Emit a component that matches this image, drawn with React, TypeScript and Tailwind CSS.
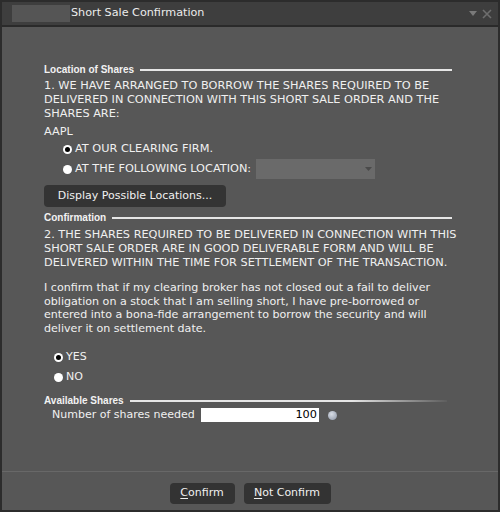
function SectionHeader({ title, fade }: { title: string; fade?: boolean }) {
  return (
    <div className="flex h-[12px] items-center gap-[6px]">
      <span className="font-['Liberation_Sans',Arial,sans-serif] text-[10px] font-bold leading-none text-[#f2f2f2]">
        {title}
      </span>
      {fade ? (
        <div className="mr-[5px] h-[2px] flex-1 bg-gradient-to-r from-[#e6e6e6] via-[#e6e6e6] via-70% to-[#5e5e5e]" />
      ) : (
        <div className="h-[2px] flex-1 bg-[#e6e6e6]" />
      )}
    </div>
  );
}

function Radio({ checked, label }: { checked?: boolean; label: string }) {
  return (
    <div className="flex h-[20px] items-center gap-[3px]">
      <span className="flex h-[9px] w-[9px] items-center justify-center rounded-full bg-white">
        {checked && <span className="h-[5px] w-[5px] rounded-full bg-black" />}
      </span>
      <span>{label}</span>
    </div>
  );
}

export default function App() {
  return (
    <div className="flex h-[512px] w-[500px] flex-col bg-[#2c2c2c] p-[2px] font-['DejaVu_Sans',Verdana,sans-serif] text-[11.3px] text-[#f0f0f0] whitespace-nowrap">
      {/* Title bar */}
      <div className="flex h-[23px] items-center bg-[#3e3e3e]">
        <div className="ml-[10px] h-[17px] w-[58px] bg-[#555555]" />
        <span className="ml-[1px] text-[11.2px] text-[#ececec]">Short Sale Confirmation</span>
        <div className="ml-auto mr-[6px] flex items-center gap-[5px]">
          <svg width="8" height="5" viewBox="0 0 8 5">
            <path d="M0 0h8L4 5z" fill="#7a7a7a" />
          </svg>
          <svg width="10" height="10" viewBox="0 0 10 10">
            <path d="M1 1l8 8M9 1l-8 8" stroke="#6e6e6e" strokeWidth="1.6" />
          </svg>
        </div>
      </div>
      <div className="h-[2px] bg-[#2a2a2a]" />

      {/* Body */}
      <div className="flex flex-1 flex-col bg-[#575757]">
        <div className="flex-1 pl-[42px] pr-[46px] pt-[37px]">
          <SectionHeader title="Location of Shares" />
          <p className="mt-[3px] leading-[14px]">
            1. WE HAVE ARRANGED TO BORROW THE SHARES REQUIRED TO BE
            <br />
            DELIVERED IN CONNECTION WITH THIS SHORT SALE ORDER AND THE
            <br />
            SHARES ARE:
          </p>
          <div className="mt-[4px] h-[14px] leading-[14px]">AAPL</div>
          <div className="ml-[19px]">
            <Radio checked label="AT OUR CLEARING FIRM." />
            <div className="flex items-center gap-[5px]">
              <Radio label="AT THE FOLLOWING LOCATION:" />
              <div className="flex h-[20px] w-[119px] items-center justify-end bg-[#6a6a6a] pr-[3px]">
                <svg width="7" height="4" viewBox="0 0 7 4">
                  <path d="M0 0h7L3.5 4z" fill="#4a4a4a" />
                </svg>
              </div>
            </div>
          </div>
          <button className="mt-[6px] flex h-[22px] w-[182px] items-center justify-center rounded-[4px] bg-[#343434] text-[11px] text-[#f0f0f0]">
            Display Possible Locations...
          </button>

          <div className="mt-[5px]">
            <SectionHeader title="Confirmation" />
          </div>
          <p className="mt-[4px] leading-[14px]">
            2. THE SHARES REQUIRED TO BE DELIVERED IN CONNECTION WITH THIS
            <br />
            SHORT SALE ORDER ARE IN GOOD DELIVERABLE FORM AND WILL BE
            <br />
            DELIVERED WITHIN THE TIME FOR SETTLEMENT OF THE TRANSACTION.
          </p>
          <p className="mt-[11px] text-[11.1px] leading-[13.5px]">
            I confirm that if my clearing broker has not closed out a fail to deliver
            <br />
            obligation on a stock that I am selling short, I have pre-borrowed or
            <br />
            entered into a bona-fide arrangement to borrow the security and will
            <br />
            deliver it on settlement date.
          </p>
          <div className="ml-[10px] mt-[12px] text-[11px]">
            <Radio checked label="YES" />
            <Radio label="NO" />
          </div>

          <div className="mt-[8px]">
            <SectionHeader title="Available Shares" fade />
          </div>
          <div className="ml-[8px] mt-[1px] flex h-[14px] items-center text-[11px]">
            <span className="w-[149px] shrink-0">Number of shares needed</span>
            <div className="flex h-[14px] w-[118px] shrink-0 items-center justify-end bg-white pr-[2px] text-[11.3px] text-black">
              100
            </div>
            <span className="ml-[9px] h-[9px] w-[9px] shrink-0 rounded-full bg-[radial-gradient(circle_at_40%_35%,#d8dde6,#8a93a3)]" />
          </div>
        </div>

        {/* Footer */}
        <div className="flex h-[39px] justify-center gap-[9px] border-t border-[#686868] pt-[11px]">
          <button className="flex h-[21px] w-[65px] items-center justify-center rounded-[4px] bg-[#333333] text-[11px] text-[#f0f0f0]">
            <span className="underline underline-offset-2">C</span>onfirm
          </button>
          <button className="flex h-[21px] w-[87px] items-center justify-center rounded-[4px] bg-[#333333] text-[11px] text-[#f0f0f0]">
            <span className="underline underline-offset-2">N</span>ot Confirm
          </button>
        </div>
      </div>
    </div>
  );
}
